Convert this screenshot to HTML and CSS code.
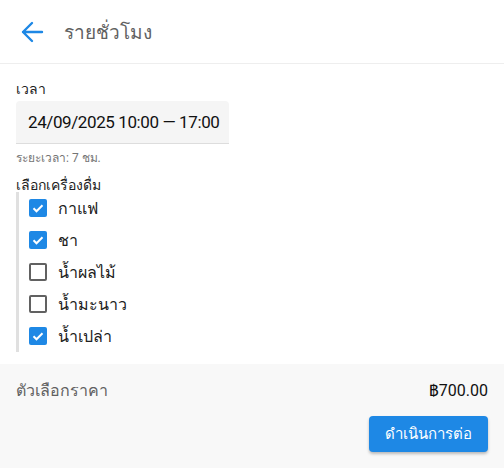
FILE: index.html
```html
<!DOCTYPE html>
<html lang="th">
<head>
<meta charset="utf-8">
<link rel="stylesheet" href="styles.css">
</head>
<body>
<header class="topbar">
  <button class="back" aria-label="back">
    <svg width="24" height="24" viewBox="0 0 24 24"><path d="M22 12H3M12 3l-9 9 9 9" fill="none" stroke="#1e88e5" stroke-width="2.4" stroke-linecap="round" stroke-linejoin="round"/></svg>
  </button>
  <h1 class="title">รายชั่วโมง</h1>
</header>
<main class="content">
  <label class="field-label">เวลา</label>
  <div class="input">24/09/2025 10:00 — 17:00</div>
  <div class="helper">ระยะเวลา: 7 ชม.</div>
  <div class="field-label drinks-label">เลือกเครื่องดื่ม</div>
  <ul class="drinks">
    <li class="row"><span class="cb checked"><svg viewBox="0 0 18 18" width="18" height="18"><path d="M4.5 9.3l3 3 6-6" fill="none" stroke="#fff" stroke-width="2"/></svg></span><span>กาแฟ</span></li>
    <li class="row"><span class="cb checked"><svg viewBox="0 0 18 18" width="18" height="18"><path d="M4.5 9.3l3 3 6-6" fill="none" stroke="#fff" stroke-width="2"/></svg></span><span>ชา</span></li>
    <li class="row"><span class="cb"></span><span>น้ำผลไม้</span></li>
    <li class="row"><span class="cb"></span><span>น้ำมะนาว</span></li>
    <li class="row"><span class="cb checked"><svg viewBox="0 0 18 18" width="18" height="18"><path d="M4.5 9.3l3 3 6-6" fill="none" stroke="#fff" stroke-width="2"/></svg></span><span>น้ำเปล่า</span></li>
  </ul>
</main>
<footer class="footer">
  <div class="price-row">
    <span class="price-label">ตัวเลือกราคา</span>
    <span class="price">฿700.00</span>
  </div>
  <div class="actions">
    <button class="primary">ดำเนินการต่อ</button>
  </div>
</footer>
</body>
</html>
```
FILE: styles.css
```css
* { box-sizing: border-box; }
html, body { margin: 0; padding: 0; }
body {
  width: 504px;
  height: 468px;
  font-family: Roboto, "Noto Sans", "Liberation Sans", sans-serif;
  color: #212121;
  background: #fff;
  display: flex;
  flex-direction: column;
}
.topbar {
  height: 64px;
  flex: none;
  display: flex;
  align-items: center;
  padding-left: 20px;
  border-bottom: 1px solid #eeeeee;
}
.back {
  width: 24px;
  height: 24px;
  padding: 0;
  border: 0;
  background: none;
  display: flex;
}
.title {
  margin: 0 0 0 20px;
  font-size: 19px;
  font-weight: 400;
  color: #616161;
}
.content {
  padding: 16px 16px 0;
  flex: 1;
}
.field-label {
  display: block;
  font-size: 14px;
  line-height: 18px;
  color: #212121;
}
.input {
  margin-top: 3px;
  width: 213px;
  height: 43px;
  padding: 0 12px;
  display: flex;
  align-items: center;
  white-space: nowrap;
  background: #f5f5f5;
  border-bottom: 1px solid #dddddd;
  border-radius: 4px 4px 0 0;
  font-size: 17px;
  letter-spacing: -0.4px;
  color: #111;
}
.helper {
  margin-top: 6px;
  font-size: 12px;
  line-height: 16px;
  color: #757575;
}
.drinks-label { margin-top: 10px; }
.drinks {
  list-style: none;
  margin: -2px 0 0;
  padding: 0 0 0 10px;
  border-left: 3px solid #e0e0e0;
}
.row {
  height: 32px;
  display: flex;
  align-items: center;
  gap: 11px;
  font-size: 16px;
}
.cb {
  width: 18px;
  height: 18px;
  border: 2px solid #616161;
  border-radius: 2px;
  display: flex;
}
.cb.checked {
  border: 0;
  background: #1e88e5;
}
.footer {
  flex: none;
  background: #f8f8f8;
  padding: 14px 16px 16px;
  display: flex;
  flex-direction: column;
  gap: 14px;
}
.price-row {
  height: 24px;
  display: flex;
  align-items: center;
  justify-content: space-between;
  font-size: 16px;
}
.price-label { color: #616161; }
.price { color: #111; }
.actions {
  display: flex;
  justify-content: flex-end;
}
.primary {
  height: 36px;
  padding: 0 16px;
  border: 0;
  border-radius: 4px;
  background: #1e88e5;
  color: #fff;
  font-family: inherit;
  font-size: 15px;
  font-weight: 500;
  box-shadow: 0 2px 3px rgba(0,0,0,0.25);
}
```
